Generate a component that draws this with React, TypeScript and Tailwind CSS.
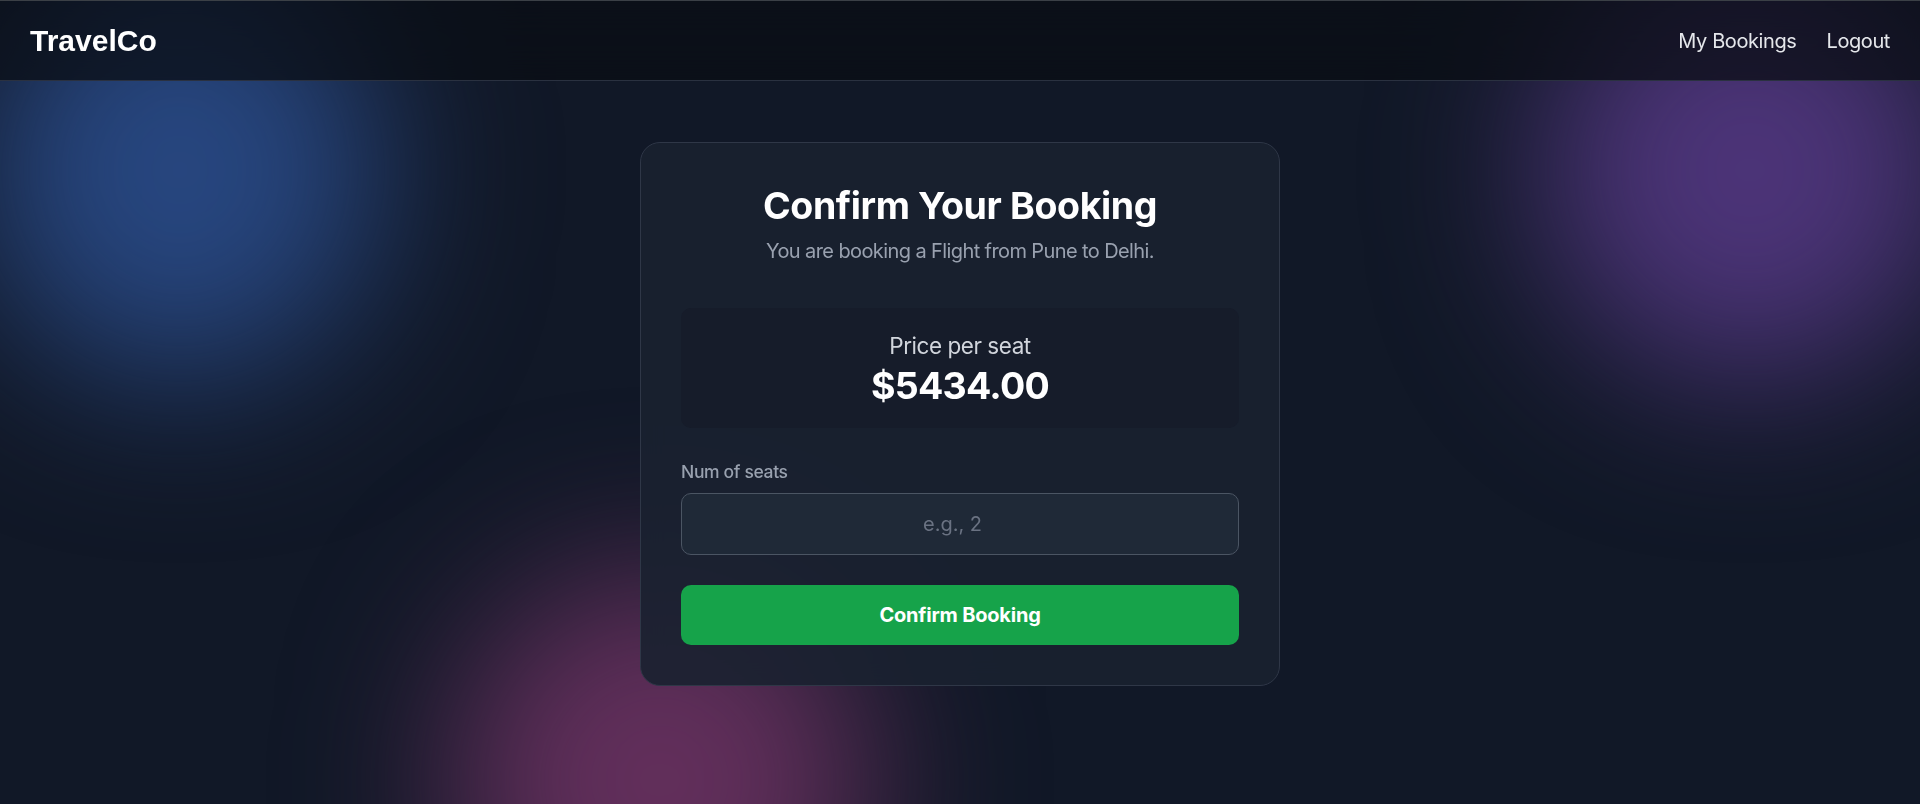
import React from "react";

const font = { fontFamily: "Inter, 'Noto Sans', sans-serif" };

const Navbar = () => {
  return (
    <header className="relative z-10 h-[81px] flex items-center justify-between px-[30px] bg-[#0a0d14]/75 backdrop-blur-xl border-b border-[#2a3140] border-t border-t-[#3b4046]">
      <div className="text-[30px] font-bold text-white" style={{ fontFamily: "'Liberation Sans', Arial, sans-serif" }}>
        TravelCo
      </div>
      <nav className="flex items-center gap-[30px] text-[20px] text-gray-200 tracking-[-0.02em]">
        <a href="#" className="hover:text-white transition">My Bookings</a>
        <a href="#" className="hover:text-white transition">Logout</a>
      </nav>
    </header>
  );
};

export default function App() {
  return (
    <div className="relative min-h-[804px] h-[804px] overflow-hidden bg-[#111827]" style={font}>
      {/* background glows */}
      <div className="pointer-events-none absolute inset-0 overflow-hidden">
        <div className="absolute left-[-20px] top-[-40px] w-[400px] h-[420px] rounded-full bg-[#27467f] blur-[80px]" />
        <div className="absolute left-[1540px] top-[-40px] w-[420px] h-[420px] rounded-full bg-[#4c3478] blur-[80px]" />
        <div className="absolute left-[450px] top-[570px] w-[420px] h-[420px] rounded-full bg-[#622f5b] blur-[80px]" />
      </div>

      <Navbar />

      <main className="relative flex justify-center pt-[61px]">
        <div className="w-[640px] rounded-[20px] border border-[#2f3747] bg-[#1a2130]/90 backdrop-blur-md p-[40px]">
          <h1 className="text-center text-[37.5px] leading-[45px] font-bold text-white tracking-[-0.01em]">
            Confirm Your Booking
          </h1>
          <p className="mt-[8px] text-center text-[20px] leading-[30px] text-gray-400 tracking-[-0.03em]">
            You are booking a Flight from Pune to Delhi.
          </p>

          <div className="mt-[42px] rounded-[10px] bg-[#161c2a] py-[20px] text-center">
            <div className="text-[22.5px] leading-[35px] text-gray-300 tracking-[-0.02em]">Price per seat</div>
            <div className="text-[37.5px] leading-[45px] font-bold text-white tracking-[-0.02em]">$5434.00</div>
          </div>

          <label className="mt-[31px] block text-[17.5px] leading-[25px] font-medium text-gray-400 tracking-[-0.02em]">
            Num of seats
          </label>
          <input
            type="number"
            placeholder="e.g., 2"
            className="mt-[9px] block w-full rounded-[10px] border border-[#4b5563] bg-[#1f2937] px-[20px] py-[15px] text-center text-[20px] leading-[30px] text-white placeholder:text-gray-500 outline-none"
          />

          <button className="mt-[30px] w-full rounded-[10px] bg-[#16a34a] py-[15px] text-[20px] leading-[30px] font-bold text-white tracking-[-0.01em] hover:bg-green-700 transition">
            Confirm Booking
          </button>
        </div>
      </main>
    </div>
  );
}
